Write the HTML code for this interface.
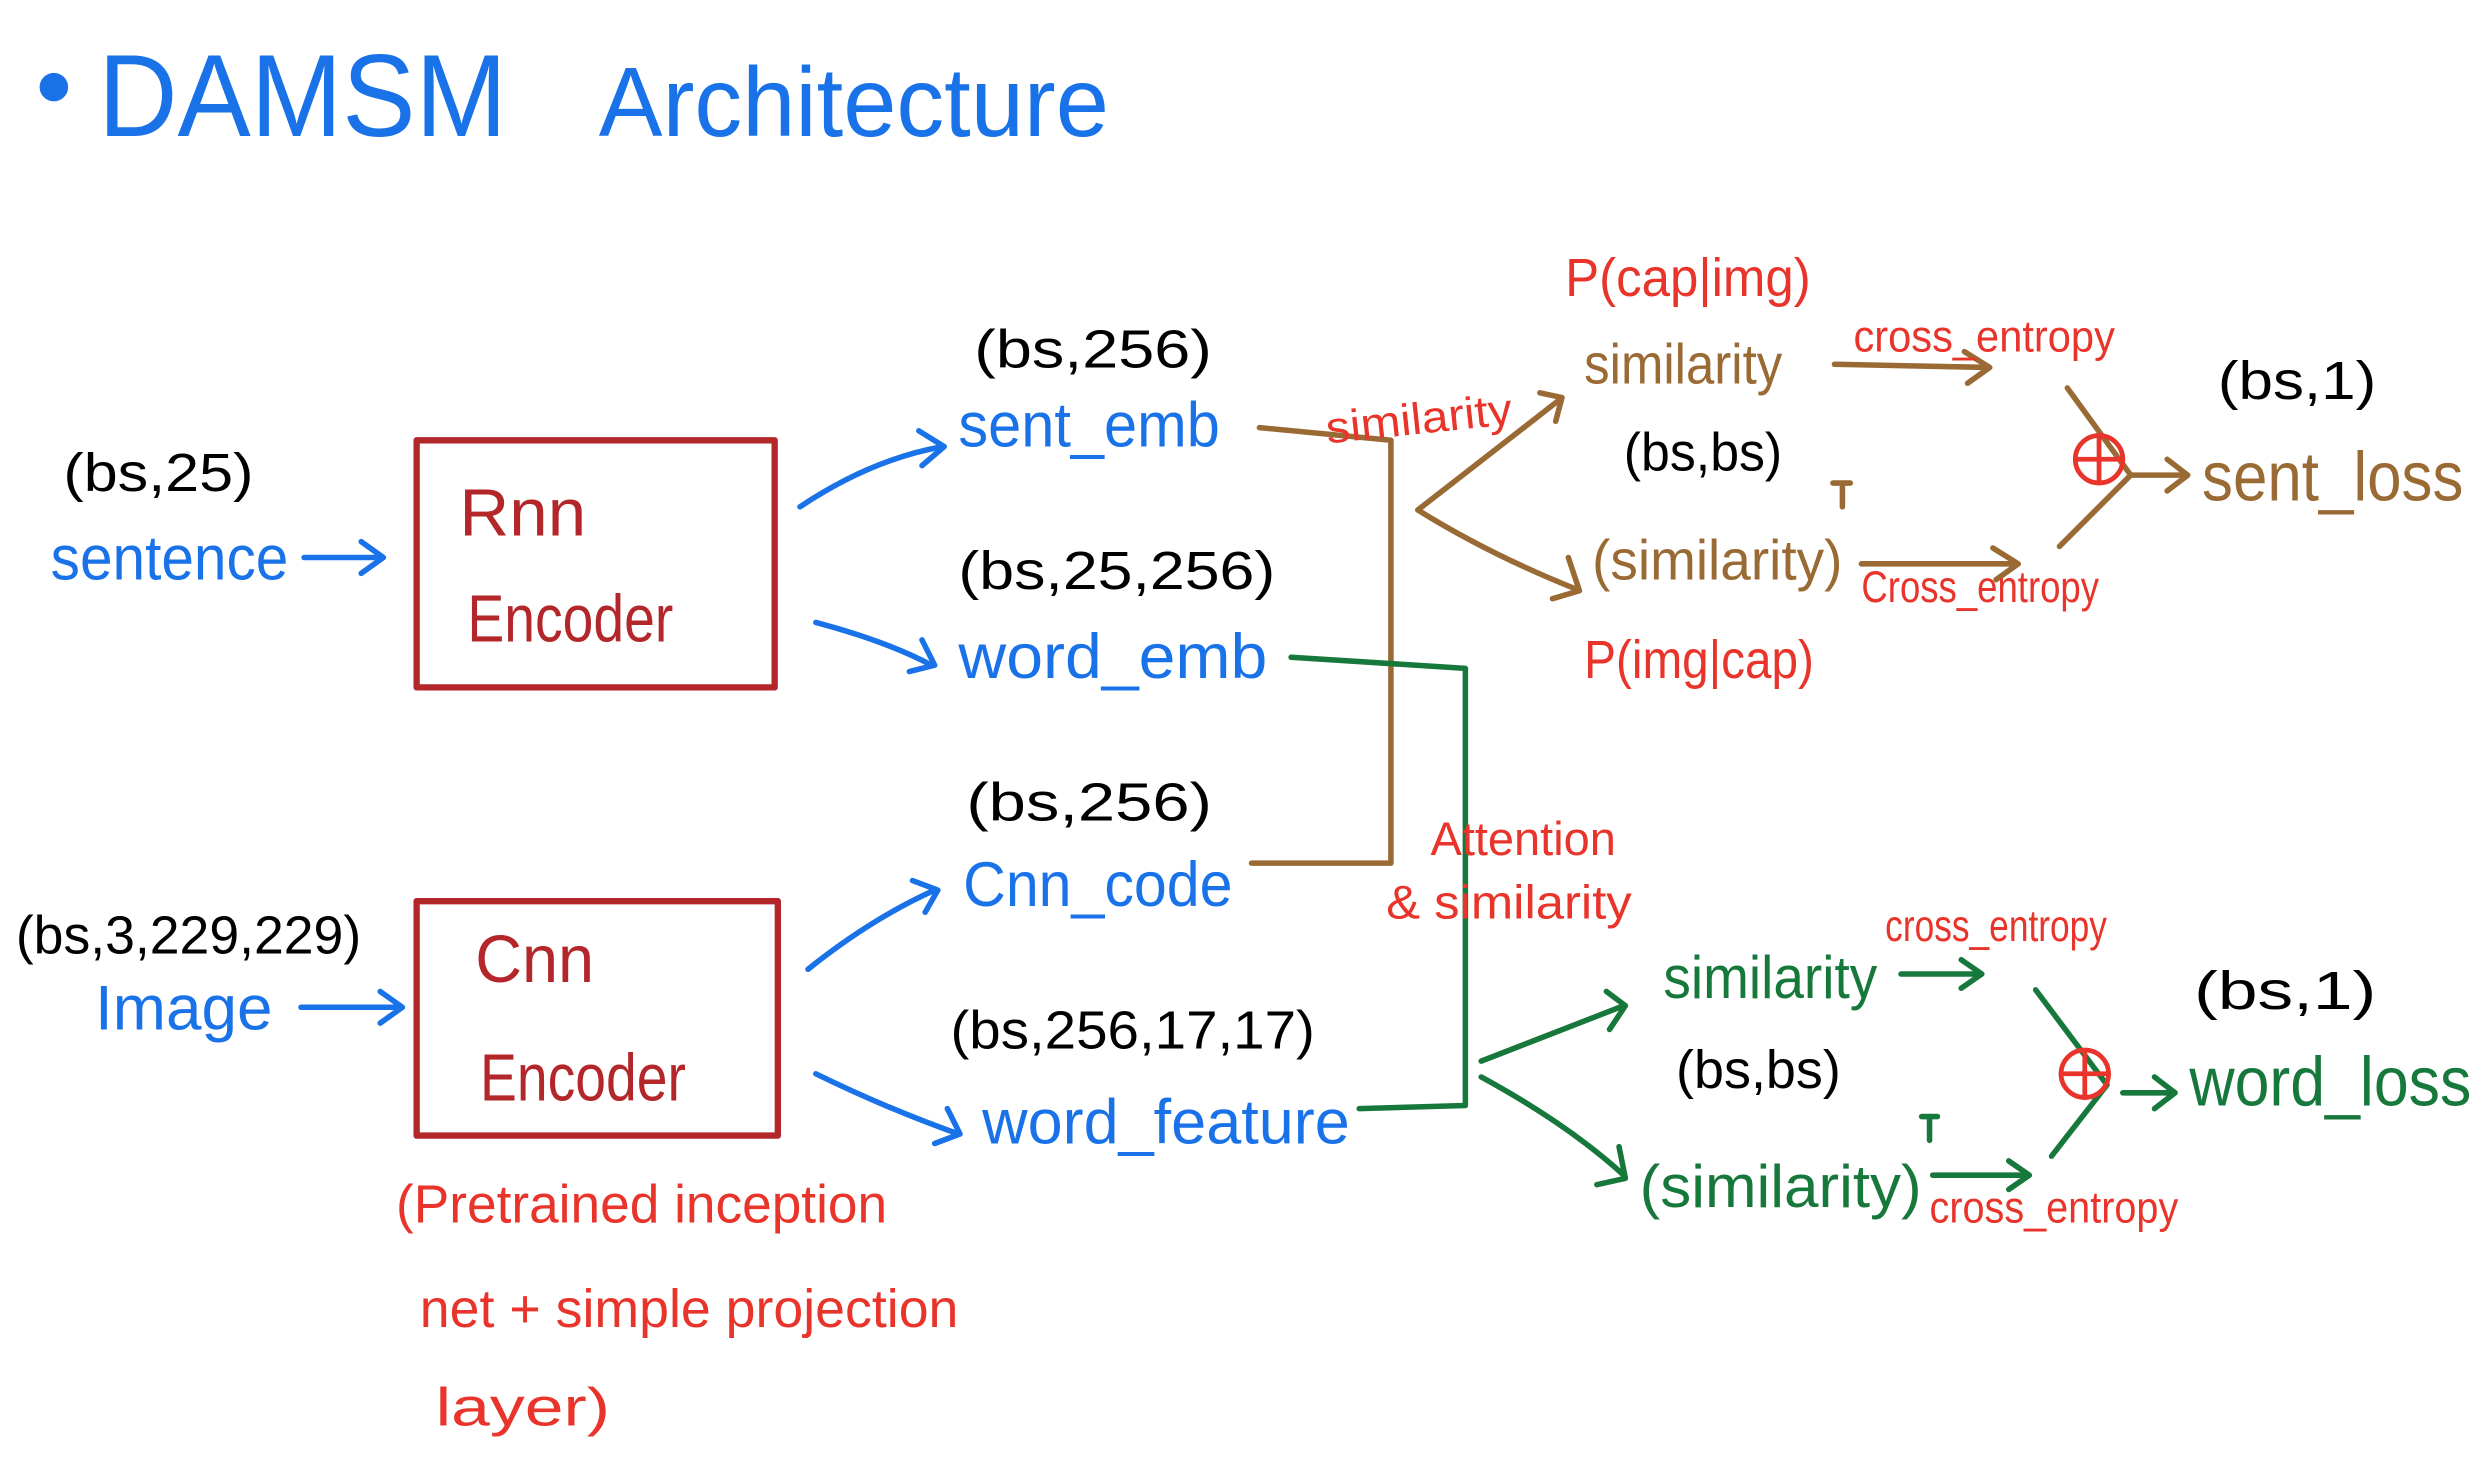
<!DOCTYPE html>
<html><head><meta charset="utf-8"><style>
html,body{margin:0;padding:0;background:#fff;}
svg{display:block;}
text{font-family:"Liberation Sans",sans-serif;}
</style></head><body>
<svg width="2484" height="1465" viewBox="0 0 1568 925" preserveAspectRatio="none" xmlns="http://www.w3.org/2000/svg">
<g fill="none" stroke-linecap="round" stroke-linejoin="round">
<circle cx="34" cy="55" r="9" fill="#1a72e8" stroke="none"/>
<rect x="263" y="278" width="226" height="156" stroke="#b3262a" stroke-width="4"/>
<rect x="263" y="569" width="228" height="148" stroke="#b3262a" stroke-width="4"/>
<g stroke="#1a72e8" stroke-width="3.5">
<path d="M192,352 L240,352 M228,342 L242,352 L228,362"/>
<path d="M190,636 L252,636 M240,626 L254,636 L240,646"/>
<path d="M505,320 Q550,290 595,282 M580,272 L596,282 L582,294"/>
<path d="M515,393 Q560,405 588,420 M582,404 L590,420 L574,424"/>
<path d="M510,612 Q550,580 590,562 M576,556 L592,562 L584,576"/>
<path d="M515,678 Q560,700 605,716 M598,700 L606,716 L590,722"/>
</g>
<g stroke="#9a6a35" stroke-width="3.5">
<path d="M795,270 L878,278 L878,545 L790,545"/>
<path d="M895,322 L985,252 M972,248 L986,251 L982,266"/>
<path d="M895,322 Q940,350 995,372 M990,352 L997,373 L980,378"/>
<path d="M1158,230 L1255,232 M1240,222 L1256,232 L1242,242"/>
<path d="M1175,356 L1272,356 M1258,346 L1274,356 L1260,366"/>
<path d="M1305,245 L1345,300 L1300,345"/>
<path d="M1345,300 L1380,300 M1368,290 L1381,300 L1368,310"/>
<path d="M1157,305 L1168,305 M1163,305 L1163,320"/>
</g>
<g stroke="#17783c" stroke-width="3.5">
<path d="M815,415 L925,422 L925,698 L858,700"/>
<path d="M935,670 L1025,635 M1014,626 L1026,635 L1016,650"/>
<path d="M935,680 Q990,710 1025,742 M1022,724 L1026,744 L1008,748"/>
<path d="M1200,615 L1250,615 M1238,606 L1251,615 L1238,624"/>
<path d="M1220,742 L1280,742 M1268,733 L1281,742 L1268,751"/>
<path d="M1285,625 L1330,685 L1295,730"/>
<path d="M1340,690 L1372,690 M1360,680 L1373,690 L1360,700"/>
<path d="M1213,705 L1223,705 M1218,705 L1218,720"/>
</g>
<g stroke="#e8342a" stroke-width="3">
<circle cx="1325" cy="290" r="15"/><path d="M1310,290 L1340,290 M1325,276 L1325,305"/>
<circle cx="1316" cy="678" r="15"/><path d="M1301,678 L1331,678 M1316,664 L1316,693"/>
</g>
</g>
<g font-size="74" fill="#1a72e8">
<text x="62" y="86" textLength="258" lengthAdjust="spacingAndGlyphs">DAMSM</text>
<text x="378" y="86" font-size="62" textLength="322" lengthAdjust="spacingAndGlyphs">Architecture</text>
</g>
<g fill="#000" font-size="34">
<text x="40" y="310" textLength="120" lengthAdjust="spacingAndGlyphs">(bs,25)</text>
<text x="615" y="232" textLength="150" lengthAdjust="spacingAndGlyphs">(bs,256)</text>
<text x="605" y="372" textLength="200" lengthAdjust="spacingAndGlyphs">(bs,25,256)</text>
<text x="610" y="518" textLength="155" lengthAdjust="spacingAndGlyphs">(bs,256)</text>
<text x="600" y="662" textLength="230" lengthAdjust="spacingAndGlyphs">(bs,256,17,17)</text>
<text x="10" y="602" textLength="218" lengthAdjust="spacingAndGlyphs">(bs,3,229,229)</text>
<text x="1025" y="297" textLength="100" lengthAdjust="spacingAndGlyphs">(bs,bs)</text>
<text x="1400" y="252" textLength="100" lengthAdjust="spacingAndGlyphs">(bs,1)</text>
<text x="1058" y="687" textLength="104" lengthAdjust="spacingAndGlyphs">(bs,bs)</text>
<text x="1385" y="637" textLength="115" lengthAdjust="spacingAndGlyphs">(bs,1)</text>
</g>
<g fill="#1a72e8" font-size="40">
<text x="32" y="366" textLength="150" lengthAdjust="spacingAndGlyphs">sentence</text>
<text x="605" y="282" textLength="165" lengthAdjust="spacingAndGlyphs">sent_emb</text>
<text x="605" y="428" textLength="195" lengthAdjust="spacingAndGlyphs">word_emb</text>
<text x="608" y="572" textLength="170" lengthAdjust="spacingAndGlyphs">Cnn_code</text>
<text x="620" y="722" textLength="232" lengthAdjust="spacingAndGlyphs">word_feature</text>
<text x="60" y="650" textLength="112" lengthAdjust="spacingAndGlyphs">Image</text>
</g>
<g fill="#b3262a" font-size="42">
<text x="290" y="338" textLength="80" lengthAdjust="spacingAndGlyphs">Rnn</text>
<text x="295" y="405" textLength="130" lengthAdjust="spacingAndGlyphs">Encoder</text>
<text x="300" y="620" textLength="75" lengthAdjust="spacingAndGlyphs">Cnn</text>
<text x="303" y="695" textLength="130" lengthAdjust="spacingAndGlyphs">Encoder</text>
</g>
<g fill="#e8342a" font-size="34">
<text x="250" y="772" textLength="310" lengthAdjust="spacingAndGlyphs">(Pretrained inception</text>
<text x="265" y="838" textLength="340" lengthAdjust="spacingAndGlyphs">net + simple projection</text>
<text x="275" y="900" textLength="110" lengthAdjust="spacingAndGlyphs">layer)</text>
<text x="988" y="187" textLength="155" lengthAdjust="spacingAndGlyphs">P(cap|img)</text>
<text x="1000" y="428" textLength="145" lengthAdjust="spacingAndGlyphs">P(img|cap)</text>
<text x="838" y="280" font-size="28" textLength="118" lengthAdjust="spacingAndGlyphs" transform="rotate(-6 838 280)">similarity</text>
<text x="1170" y="222" font-size="28" textLength="165" lengthAdjust="spacingAndGlyphs">cross_entropy</text>
<text x="1175" y="380" font-size="28" textLength="150" lengthAdjust="spacingAndGlyphs">Cross_entropy</text>
<text x="903" y="540" font-size="30" textLength="117" lengthAdjust="spacingAndGlyphs">Attention</text>
<text x="875" y="580" font-size="30" textLength="155" lengthAdjust="spacingAndGlyphs">&amp; similarity</text>
<text x="1190" y="594" font-size="28" textLength="140" lengthAdjust="spacingAndGlyphs">cross_entropy</text>
<text x="1218" y="772" font-size="28" textLength="157" lengthAdjust="spacingAndGlyphs">cross_entropy</text>
</g>
<g fill="#9a6a35" font-size="36">
<text x="1000" y="242" textLength="125" lengthAdjust="spacingAndGlyphs">similarity</text>
<text x="1005" y="366" textLength="158" lengthAdjust="spacingAndGlyphs">(similarity)</text>
<text x="1390" y="316" font-size="44" textLength="165" lengthAdjust="spacingAndGlyphs">sent_loss</text>
</g>
<g fill="#17783c" font-size="38">
<text x="1050" y="630" textLength="135" lengthAdjust="spacingAndGlyphs">similarity</text>
<text x="1035" y="762" textLength="178" lengthAdjust="spacingAndGlyphs">(similarity)</text>
<text x="1382" y="698" font-size="44" textLength="178" lengthAdjust="spacingAndGlyphs">word_loss</text>
</g>
</svg>
</body></html>
